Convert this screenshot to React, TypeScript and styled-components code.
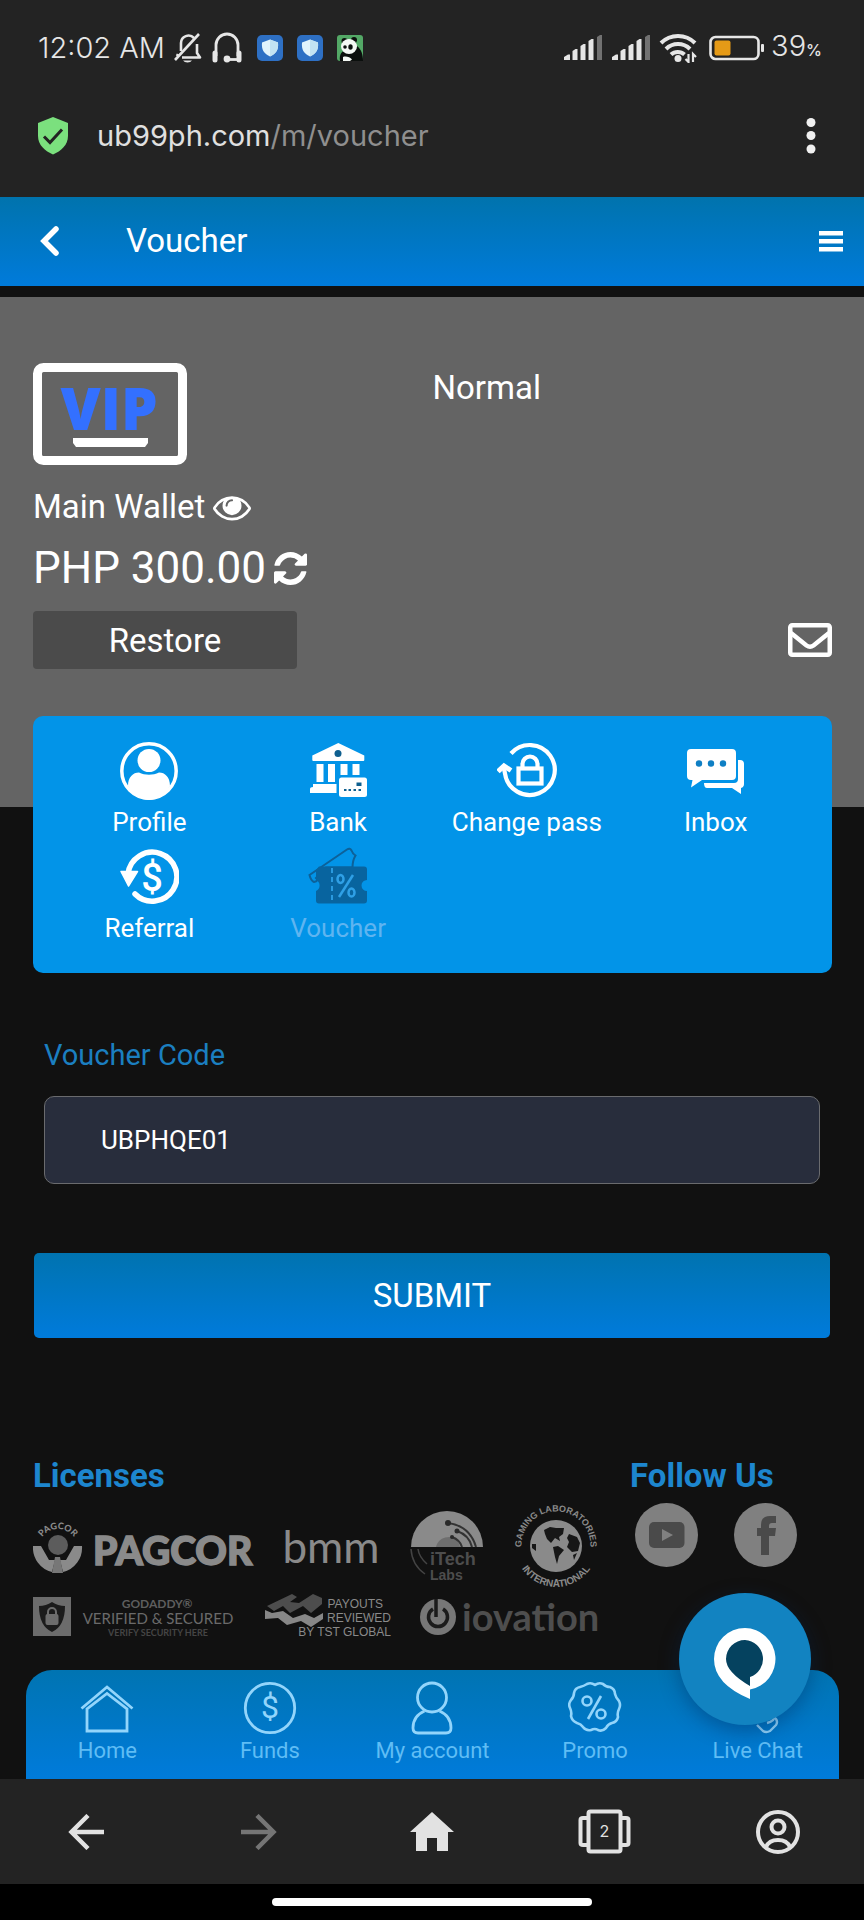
import React, {useState} from 'react'
import styled, {createGlobalStyle} from 'styled-components'

const GlobalStyle = createGlobalStyle`
    * {
        box-sizing: border-box;
    }
    body {
        margin: 0;
        background: #111;
        color: #fff;
        font-family: Roboto, "Liberation Sans", sans-serif;
    }
    svg {
        display: block;
        flex: none;
    }
    a {
        color: inherit;
        text-decoration: none;
    }
    button {
        padding: 0;
        border: 0;
        background: none;
        color: inherit;
        font: inherit;
        cursor: pointer;
    }
`

const Page = styled.div`
    display: flex;
    flex-direction: column;
    min-height: 100vh;
`
const StatusBar = styled.div`
    display: flex;
    align-items: center;
    justify-content: space-between;
    height: 76px;
    padding: 20px 42px 0 38px;
    background: #232323;
    color: #e6e6e6;
    font: 300 29px/36px Inter, sans-serif;
`
const StatusGroup = styled.div<{ $gap: number }>`
    display: flex;
    align-items: center;
    gap: ${p => p.$gap}px;
`
const Clock = styled.span`
    margin-right: -6px;
`
const Percent = styled.small`
    font-size: 16px;
    font-weight: 500;
`
const AddressBar = styled.div`
    display: flex;
    align-items: center;
    gap: 28px;
    height: 121px;
    padding: 0 28px 2px 37px;
    background: #232323;
`
const Address = styled.span`
    flex: 1;
    color: #e0e0e0;
    font: 400 29px/40px Inter, sans-serif;
`
const AddressPath = styled.span`
    color: #8f8f8f;
`
const Header = styled.header`
    display: flex;
    align-items: center;
    height: 89px;
    padding: 0 20px 2px 40px;
    background: linear-gradient(#0073ad, #007bdb);
`
const Title = styled.h1`
    flex: 1;
    margin: 0 0 0 66px;
    font-size: 33px;
    font-weight: 400;
    line-height: 40px;
`
const Main = styled.main`
    flex: 1;
    padding-top: 11px;
`
const Wallet = styled.section`
    padding: 66px 32px 138px 33px;
    background: #646464;
`
const Level = styled.div`
    display: grid;
    grid-template-columns: 1fr 1fr;
    font-size: 33px;
    line-height: 50px;
`
const WalletName = styled.div`
    display: flex;
    align-items: center;
    gap: 8px;
    margin-top: 22px;
    font-size: 33px;
    line-height: 40px;
`
const Balance = styled.div`
    display: flex;
    align-items: center;
    gap: 8px;
    margin-top: 11px;
    font-size: 44px;
    line-height: 60px;
`
const WalletActions = styled.div`
    display: flex;
    align-items: center;
    justify-content: space-between;
    margin-top: 13px;
`
const RestoreButton = styled.button`
    width: 264px;
    height: 58px;
    border-radius: 4px;
    background: #4b4b4b;
    font-size: 33px;
`
const Menu = styled.nav`
    display: grid;
    grid-template-columns: repeat(4, 1fr);
    margin: -91px 32px 0 33px;
    padding: 23px 22px 22px;
    border-radius: 10px;
    background: #0294e8;
`
const MenuItem = styled.a<{ $current?: boolean }>`
    display: flex;
    flex-direction: column;
    align-items: center;
    gap: 1px;
    height: 106px;
    color: ${p => p.$current ? '#5fb4f0' : '#fff'};
    font-size: 26px;
    line-height: 40px;
    white-space: nowrap;

    svg {
        margin: 1px 0;
    }
`
const Form = styled.form`
    padding: 62px 34px 0;
`
const Field = styled.div`
    display: flex;
    flex-direction: column;
    gap: 21px;
    padding: 0 10px;
`
const Label = styled.label`
    color: #1b7fc0;
    font-size: 29px;
    line-height: 40px;
`
const CodeInput = styled.input`
    width: 100%;
    height: 88px;
    padding: 0 56px;
    border: 1px solid #6a6b6e;
    border-radius: 10px;
    outline: 0;
    background: #282d3c;
    color: #fff;
    font: 26px Roboto, sans-serif;
`
const SubmitButton = styled.button`
    width: 100%;
    height: 85px;
    margin-top: 69px;
    border-radius: 5px;
    background: linear-gradient(#0073b0, #007bdb);
    font-size: 33px;
`
const Footer = styled.footer`
    display: flex;
    gap: 30px;
    padding: 118px 32px 27px 33px;
`
const Licenses = styled.section`
    flex: 0 1 567px;
`
const Follow = styled.section`
    flex: 1;
`
const FooterTitle = styled.h2`
    margin: 0 0 7px;
    color: #1d86ce;
    font-size: 33px;
    font-weight: 700;
    line-height: 40px;
`
const LogoRow = styled.div<{ $height: number }>`
    display: flex;
    align-items: center;
    justify-content: space-between;
    height: ${p => p.$height}px;
    margin-bottom: 2px;
`
const Socials = styled.div`
    display: flex;
    gap: 36px;
    padding: 0 5px;
`
const TabBar = styled.nav`
    position: relative;
    display: grid;
    grid-template-columns: repeat(5, 1fr);
    height: 109px;
    margin: 0 25px 0 26px;
    padding-top: 11px;
    border-radius: 26px 26px 0 0;
    background: linear-gradient(#0074b2, #007bdb);
`
const Tab = styled.a`
    display: flex;
    flex-direction: column;
    align-items: center;
    color: #5fbdf5;
    font-size: 22px;
    line-height: 32px;
    white-space: nowrap;

    svg {
        color: #93d5fb;
    }
`
const ChatBubble = styled.button`
    position: absolute;
    top: -77px;
    right: 28px;
    display: flex;
    align-items: flex-start;
    justify-content: center;
    width: 132px;
    height: 132px;
    padding-top: 35px;
    border-radius: 50%;
    background: #1283c1;
    box-shadow: 0 6px 20px rgba(0, 40, 90, .4);
`
const BrowserBar = styled.div`
    display: grid;
    grid-template-columns: repeat(5, 1fr);
    height: 105px;
    background: #232323;
    color: #e2e2e2;
`
const BrowserButton = styled.button`
    display: flex;
    align-items: center;
    justify-content: center;

    &:disabled {
        color: #757575;
    }
`
const GestureArea = styled.div`
    display: flex;
    align-items: center;
    justify-content: center;
    height: 36px;
    background: #000;
`
const GesturePill = styled.div`
    width: 37%;
    height: 8px;
    border-radius: 4px;
    background: #fff;
`

const BellOff = () => (
    <svg width="30" height="32" viewBox="0 0 30 32" fill="none" stroke="currentColor" strokeWidth="2.6">
        <path d="M8 19V11a7.5 7.5 0 0 1 13-5M24 12v9l3 4.5H9M5 22l-1 2" strokeLinejoin="round" />
        <path d="M26 2L2 28" />
        <path d="M10 28.5a5 3.5 0 0 0 9 0z" fill="currentColor" stroke="none" />
    </svg>
)

const Headset = () => (
    <svg width="32" height="32" viewBox="0 0 32 32" fill="none" stroke="currentColor" strokeWidth="2.8">
        <path d="M5 24V13a11 11 0 0 1 22 0v11" />
        <path d="M4 21v7M28 21v7" strokeWidth="5" strokeLinecap="round" />
        <path d="M27 27.5H16" />
        <circle cx="16" cy="27" r="3.4" fill="currentColor" stroke="none" />
    </svg>
)

const ShieldApp = () => (
    <svg width="26" height="26" viewBox="0 0 26 26">
        <rect width="26" height="26" rx="5" fill="#2e70c4" />
        <path d="M13 4.5l8 3c.6 7-1.5 11-8 14-6.5-3-8.6-7-8-14z" fill="#e2f4fc" />
        <path d="M13 4.5l8 3c.6 7-1.5 11-8 14z" fill="#c2e2f2" />
    </svg>
)

const PandaApp = () => (
    <svg width="26" height="26" viewBox="0 0 26 26">
        <rect width="26" height="26" rx="3" fill="#53a866" />
        <path d="M3 26c-1-7 2-10 6-11l11-4c4 3 6 8 6 15z" fill="#0b0f0d" />
        <circle cx="7.5" cy="6" r="3" fill="#0b0f0d" />
        <circle cx="17" cy="5" r="3" fill="#0b0f0d" />
        <ellipse cx="12" cy="11.5" rx="8" ry="7.5" fill="#f4f8f4" />
        <circle cx="8" cy="12" r="1.8" fill="#0b0f0d" />
        <ellipse cx="13.5" cy="12" rx="2.2" ry="2.8" fill="#0b0f0d" />
        <path d="M6 22c3-1 7 0 9 2.5l-2 1.5H6z" fill="#f4f8f4" />
    </svg>
)

const Signal = () => (
    <svg width="40" height="26" viewBox="0 0 40 26" fill="currentColor">
        <path d="M1 22l4-2.5h2V25H1zM9.5 16l3-2h2v11h-5zM17.5 11l3-2h2v16h-5zM25.5 6l3-2h2v21h-5z" />
        <path d="M34 2l3-2h2v25h-5z" opacity=".4" />
    </svg>
)

const Wifi = () => (
    <svg width="38" height="30" viewBox="0 0 38 30" fill="none" stroke="currentColor" strokeWidth="4">
        <path d="M2 10a24 24 0 0 1 34 0M7 16a17 17 0 0 1 24 0M12 21.5a10 10 0 0 1 13.5 0" />
        <circle cx="19" cy="25.5" r="3.5" fill="currentColor" stroke="none" />
        <path d="M29.5 21v8l-3-3M34 29v-8l3 3" strokeWidth="2.2" />
    </svg>
)

const Battery = () => (
    <svg width="56" height="26" viewBox="0 0 56 26" fill="none">
        <rect x="1.5" y="2" width="48" height="22" rx="5" stroke="currentColor" strokeWidth="2.6" />
        <rect x="5.5" y="5.5" width="16" height="15" rx="2" fill="#e59a17" />
        <rect x="52" y="9" width="3" height="8" rx="1" fill="currentColor" />
    </svg>
)

const SecureShield = () => (
    <svg width="32" height="38" viewBox="0 0 32 38">
        <path d="M16 0l15 6v13c0 9-7 15-15 18.5C8 34 1 28 1 19V6z" fill="#7be07e" />
        <path d="M7 19.5l6 6 12-13" fill="none" stroke="#232323" strokeWidth="3" />
    </svg>
)

const Dots = () => (
    <svg width="50" height="38" viewBox="0 0 50 38" fill="#f0f0f0">
        <circle cx="25" cy="5.5" r="4.5" />
        <circle cx="25" cy="18.5" r="4.5" />
        <circle cx="25" cy="32" r="4.5" />
    </svg>
)

const VipBadge = () => (
    <svg width="154" height="102" viewBox="0 0 154 102">
        <rect x="4.5" y="4.5" width="145" height="93" rx="6" fill="none" stroke="#fff" strokeWidth="9" />
        <text x="76" y="67" textAnchor="middle" fontFamily="Open Sans, sans-serif" fontWeight="800" fontSize="58" fill="#3370ff">VIP</text>
        <path d="M40 75h75v5l-3 4H43l-3-4z" fill="#fff" />
    </svg>
)

const Eye = () => (
    <svg width="38" height="38" viewBox="0 0 1792 1792" fill="currentColor">
        <path d="M1664 960q-152-236-381-353 61 104 61 225 0 185-131.5 316.5t-316.5 131.5-316.5-131.5-131.5-316.5q0-121 61-225-229 117-381 353 133 205 333.5 326.5t434.5 121.5 434.5-121.5 333.5-326.5zm-720-384q0-20-14-34t-34-14q-125 0-214.5 89.5t-89.5 214.5q0 20 14 34t34 14 34-14 14-34q0-86 61-147t147-61q20 0 34-14t14-34zm848 384q0 34-20 69-140 230-376.5 368.5t-499.5 138.5-499.5-139-376.5-368q-20-35-20-69t20-69q140-229 376.5-368t499.5-139 499.5 139 376.5 368q20 35 20 69z" />
    </svg>
)

const Refresh = () => (
    <svg width="33" height="33" viewBox="0 0 1536 1536" fill="currentColor">
        <path d="M1511 928q0 5-1 7-64 268-268 434.5t-478 166.5q-146 0-282.5-55t-243.5-157l-129 129q-19 19-45 19t-45-19-19-45v-448q0-26 19-45t45-19h448q26 0 45 19t19 45-19 45l-137 137q71 66 161 102t187 36q134 0 250-65t186-179q11-17 53-117 8-23 30-23h192q13 0 22.5 9.5t9.5 22.5zm25-800v448q0 26-19 45t-45 19h-448q-26 0-45-19t-19-45 19-45l138-138q-148-137-349-137-134 0-250 65t-186 179q-11 17-53 117-8 23-30 23h-199q-13 0-22.5-9.5t-9.5-22.5v-7q65-268 270-434.5t480-166.5q146 0 284 55.5t245 156.5l130-129q19-19 45-19t45 19 19 45z" />
    </svg>
)

const Envelope = () => (
    <svg width="44" height="34" viewBox="0 0 44 34" fill="none" stroke="currentColor" strokeWidth="4.5">
        <rect x="2.25" y="2.25" width="39.5" height="29.5" rx="2" />
        <path d="M3 10l15.5 12.5q3.5 2.5 7 0L41 10" />
    </svg>
)

const ProfileIcon = () => (
    <svg width="60" height="60" viewBox="0 0 60 60" fill="currentColor">
        <circle cx="30" cy="31" r="27.2" fill="none" stroke="currentColor" strokeWidth="3.5" />
        <circle cx="30" cy="20.5" r="11.5" />
        <path d="M9 46c0-9 5-13.5 11-13.5 6 3 14 3 20 0 6 0 11 4.5 11 13.5-5 8-13 14-21 14s-16-6-21-14z" />
    </svg>
)

const BankIcon = () => (
    <svg width="60" height="60" viewBox="0 0 60 60" fill="currentColor">
        <path d="M30.3 3l26 12.5V20q0 1-1 1h-50q-1 0-1-1v-4.5zM8.5 24h7v18h-7zM20 24h7v18h-7zM32.5 24h7v11h-7zM44.5 24h7v11h-7z" />
        <path d="M5 44h23.5v9H2v-4q0-2 3-2z" />
        <rect x="31" y="37.5" width="28" height="19.5" rx="2.5" />
        <g fill="#0e5f8f">
            <circle cx="30" cy="13.5" r="3.5" />
            <rect x="48.5" y="42.5" width="5" height="3.5" />
            <path d="M36 49h2.5v2H36zM40.5 49H43v2h-2.5zM45.5 49H48v2h-2.5zM50.5 49H53v2h-2.5z" />
        </g>
    </svg>
)

const PasswordIcon = () => (
    <svg width="60" height="60" viewBox="0 0 60 60" fill="none" stroke="currentColor" strokeWidth="4.2">
        <path d="M14 13.5a25 25 0 1 1-6 20l-1-5" />
        <path d="M1 31.5l6-5.5 7 4.5" strokeWidth="5" />
        <rect x="21.5" y="28.5" width="23" height="15" />
        <path d="M25.5 28v-4a7.5 7.5 0 0 1 15 0v4" />
    </svg>
)

const InboxIcon = () => (
    <svg width="60" height="60" viewBox="0 0 60 60" fill="currentColor">
        <path d="M5 9h41q4 0 4 4v23q0 4-4 4H16L5 47.5 6.5 40H5q-4 0-4-4V13q0-4 4-4z" />
        <path d="M52 20h2q4 0 4 4v20q0 3-3 4v6l-9-6H21q-3 0-3-5h30q4 0 4-4z" />
        <g fill="#0f7fc4">
            <circle cx="13" cy="23.5" r="3.2" />
            <circle cx="25" cy="23.5" r="3.2" />
            <circle cx="37" cy="23.5" r="3.2" />
        </g>
    </svg>
)

const ReferralIcon = () => (
    <svg width="60" height="60" viewBox="0 0 60 60" fill="currentColor">
        <path d="M9 28a24.5 24.5 0 1 1 7 20" fill="none" stroke="currentColor" strokeWidth="5.5" strokeLinecap="round" />
        <path d="M2 25.5h16.5L9.5 40z" stroke="currentColor" strokeWidth="1.5" strokeLinejoin="round" />
        <text x="33" y="45" textAnchor="middle" fontSize="38" fontWeight="500">$</text>
    </svg>
)

const VoucherIcon = () => (
    <svg width="60" height="60" viewBox="0 0 60 60">
        <path d="M1.5 29L39 3.5q3-2 4.5 1 1 3 4 5-3 5-3 12H18L8 32q3 3-2 4-3-1-4.5-7z" fill="none" stroke="#0d6199" strokeWidth="2" />
        <path d="M11 20.5h45q3 0 3 3V34a5.5 5.5 0 0 0 0 11v9.5q0 3-3 3H11q-3 0-3-3V45a6 6 0 0 0 0-11V24z" fill="#08649f" />
        <path d="M24 22v36" stroke="#2fa0e6" strokeWidth="1.8" strokeDasharray="5 4" />
        <g fill="none" stroke="#2fa0e6" strokeWidth="2.5">
            <ellipse cx="32.5" cy="33" rx="3" ry="4" />
            <ellipse cx="43.5" cy="46.5" rx="3" ry="4" />
            <path d="M45 29L31 51" />
        </g>
    </svg>
)

const PagcorLogo = () => (
    <svg width="222" height="52" viewBox="0 0 222 52" fill="#8a8a8a">
        <defs>
            <path id="pagcor-arc" d="M7 20a19.5 19.5 0 0 1 36 0" />
        </defs>
        <text fontFamily="Lato, sans-serif" fontWeight="900" fontSize="9">
            <textPath href="#pagcor-arc" startOffset="50%" textAnchor="middle">PAGCOR</textPath>
        </text>
        <path d="M0 25h8l8 14h6l-3 12A25 25 0 0 1 0 25zM49 25h-8l-8 14h-6l3 12A25 25 0 0 0 49 25z" />
        <circle cx="25" cy="24" r="10" fill="#5c5c5c" />
        <path d="M22 36h5l3 16h-11z" fill="#777" />
        <text x="60" y="44" fontFamily="Lato, sans-serif" fontWeight="900" fontSize="39" stroke="#8a8a8a" strokeWidth="1.5">PAGCOR</text>
    </svg>
)

const BmmLogo = () => (
    <svg width="98" height="60" viewBox="0 0 98 60">
        <text x="48" y="46" textAnchor="middle" fontFamily="Lato, sans-serif" fontSize="44" fill="#8a8a8a">bmm</text>
    </svg>
)

const ItechLogo = () => (
    <svg width="74" height="73" viewBox="0 0 74 73">
        <path d="M1 36a36 36 0 0 1 72 0z" fill="#8a8a8a" />
        <path d="M26 36a13 13 0 0 1 22-6l2 6z" fill="#6e6e6e" />
        <path d="M38 12q22 3 28 24M47 20q12 4 15 16M42 26q8 3 10 10" fill="none" stroke="#333" strokeWidth="2" />
        <g fill="#2a2a2a">
            <circle cx="38" cy="12" r="3" />
            <circle cx="47" cy="20" r="2.5" />
            <circle cx="42" cy="26" r="2" />
        </g>
        <path d="M1 38q1 16 14 25M8 38q1 8 9 15" fill="none" stroke="#444" strokeWidth="1.5" />
        <g fill="#4d4d4d" fontFamily="Liberation Sans, sans-serif" fontWeight="700">
            <text x="20" y="54" fontSize="18">iTech</text>
            <text x="20" y="69" fontSize="14">Labs</text>
        </g>
    </svg>
)

const GamingLabsLogo = () => (
    <svg width="88" height="88" viewBox="0 0 88 88" fill="#8a8a8a">
        <defs>
            <path id="labs-top" d="M13 58a34.5 34.5 0 1 1 62 0" />
            <path id="labs-bottom" d="M3 43a41 41 0 0 0 82 0" />
        </defs>
        <g fontFamily="Liberation Sans, sans-serif" fontWeight="700">
            <text fontSize="9">
                <textPath href="#labs-top" startOffset="50%" textAnchor="middle">GAMING LABORATORIES</textPath>
            </text>
            <text fontSize="10">
                <textPath href="#labs-bottom" startOffset="50%" textAnchor="middle">INTERNATIONAL</textPath>
            </text>
        </g>
        <circle cx="44" cy="43" r="26" />
        <path d="M32 27l6-3 6 1 8 0-1 6-4 3 1 4-5-3-4 5-4-4-2-5zM41 44l5-1 6 4-5 6-2 8-2-7zM57 31l8 3 3 6-2 8-6 1-5-5 2-5-2-4zM20 41h4v7l-4-3zM61 52l4-2-3 7z" fill="#171717" />
    </svg>
)

const GodaddyLogo = () => (
    <svg width="204" height="44" viewBox="0 0 204 44">
        <rect width="38" height="39" y="2" fill="#6c6c6c" />
        <path d="M19 7q6 4 13 4 0 20-13 26Q6 31 6 11q7 0 13-4z" fill="#1b1b1b" />
        <rect x="12.5" y="19" width="13" height="11" rx="2" fill="#6c6c6c" />
        <path d="M15 20v-3a4 4 0 0 1 8 0v3" fill="none" stroke="#6c6c6c" strokeWidth="2" />
        <g textAnchor="middle" fontFamily="Lato, sans-serif">
            <text x="124" y="13" fontSize="12" fill="#5e5e5e" fontWeight="700">GODADDY®</text>
            <text x="125" y="29" fontSize="15" fill="#6a6a6a">VERIFIED &amp; SECURED</text>
            <text x="125" y="41" fontSize="9" fill="#454545" fontWeight="700">VERIFY SECURITY HERE</text>
        </g>
    </svg>
)

const TstLogo = () => (
    <svg width="127" height="48" viewBox="0 0 127 48">
        <path d="M2 13L27 1l5 3-7 5 9 1L48 1l9 4v6l-11 9-8-7-13 7-7-7-9 5z" fill="#4d4d4d" />
        <path d="M0 17l7 3 11-2 10 7 12-4 9 4 9-5v6l-12 8-10-6-14 4-9-7-13 1z" fill="#878787" />
        <g fontFamily="Liberation Sans, sans-serif" fontSize="12" fill="#8a8a8a" textAnchor="end">
            <text x="118" y="15">PAYOUTS</text>
            <text x="126" y="29">REVIEWED</text>
            <text x="126" y="43">BY TST GLOBAL</text>
        </g>
    </svg>
)

const IovationLogo = () => (
    <svg width="181" height="48" viewBox="0 0 181 48">
        <circle cx="19" cy="24" r="18" fill="#777" />
        <path d="M24 16a9.5 9.5 0 1 1-10 0M17 6v18" fill="none" stroke="#1b1b1b" strokeWidth="3.5" />
        <text x="43" y="38" fontFamily="Lato, sans-serif" fontWeight="700" fontSize="38" fill="#4e4e4e">iovation</text>
    </svg>
)

const Youtube = () => (
    <svg width="63" height="64" viewBox="0 0 63 64">
        <ellipse cx="31.5" cy="32" rx="31.5" ry="32" fill="#808080" />
        <rect x="14" y="19" width="35.5" height="26" rx="5" fill="#4a4a4a" />
        <path d="M27 26l11 6-11 6z" fill="#808080" />
    </svg>
)

const Facebook = () => (
    <svg width="63" height="64" viewBox="0 0 63 64">
        <ellipse cx="31.5" cy="32" rx="31.5" ry="32" fill="#808080" />
        <path d="M27 52V33h-4v-8h4v-3q0-9 9-9h6v7h-4q-3 0-3 3v2h7l-1 8h-6v19z" fill="#4a4a4a" />
    </svg>
)

const HomeTabIcon = () => (
    <svg width="54" height="54" viewBox="0 0 54 54" fill="none" stroke="currentColor" strokeWidth="2.8">
        <path d="M1.5 27.5L27 6l25.5 21.5" />
        <path d="M7 50V28L27 12.5 47 28v22z" />
    </svg>
)

const FundsIcon = () => (
    <svg width="54" height="54" viewBox="0 0 54 54">
        <circle cx="27" cy="27" r="24.7" fill="none" stroke="currentColor" strokeWidth="2.8" />
        <text x="27" y="37" textAnchor="middle" fontSize="32" fill="currentColor">$</text>
    </svg>
)

const AccountIcon = () => (
    <svg width="54" height="54" viewBox="0 0 54 54" fill="none" stroke="currentColor" strokeWidth="2.8">
        <circle cx="27" cy="16.5" r="14.5" />
        <path d="M19.5 30Q8 35 8 47q0 5 5 5h28q5 0 5-5 0-12-11.5-17" />
    </svg>
)

const PromoIcon = () => (
    <svg width="54" height="54" viewBox="0 0 54 54" fill="none" stroke="currentColor" strokeWidth="2.6">
        <path d="M27 4q4-3 8-1 3 3 7 3 5 2 5 7 1 4 4 7 2 4 0 8-2 4-1 8-1 5-6 6-4 1-6 5-4 4-8 2-3-2-7 0-5 1-8-3-2-3-6-4-5-2-6-7 1-4-1-8-2-4 1-8 3-3 3-7 1-5 6-6 4-1 7-3 4-2 8 1z" strokeLinejoin="round" />
        <circle cx="19" cy="20" r="4.5" />
        <circle cx="33" cy="33" r="4.5" />
        <path d="M33 15L20 38" />
    </svg>
)

const LiveChatIcon = () => (
    <svg width="54" height="54" viewBox="0 0 54 54" fill="none" stroke="currentColor" strokeWidth="2.4">
        <path d="M10 24a17 17 0 0 1 34 0v10q0 6-8 8" />
        <path d="M26 44l6 6q3 2 7 0l6-6q2-3 0-6l-5-5" strokeLinejoin="round" />
    </svg>
)

const ChatLogo = () => (
    <svg width="62" height="72" viewBox="0 0 62 72">
        <path d="M31 0a31 31 0 0 1 5 61.5V71Q0 56 0 31A31 31 0 0 1 31 0z" fill="#fff" />
        <path d="M31 12a19 19 0 0 1 5 37v9Q12 44 12 31a19 19 0 0 1 19-19z" fill="#05425f" />
    </svg>
)

const ArrowLeft = () => (
    <svg width="36" height="36" viewBox="0 0 36 36" fill="none" stroke="currentColor" strokeWidth="4.5">
        <path d="M36 18H3M20 1.5L3.5 18 20 34.5" />
    </svg>
)

const ArrowRight = () => (
    <svg width="36" height="36" viewBox="0 0 36 36" fill="none" stroke="currentColor" strokeWidth="4.5">
        <path d="M0 18h33M16 1.5L32.5 18 16 34.5" />
    </svg>
)

const HomeSolid = () => (
    <svg width="44" height="40" viewBox="0 0 44 40" fill="currentColor">
        <path d="M22 0l22 20h-6v19H27V26H17v13H6V20H0z" />
    </svg>
)

const TabsIcon = () => (
    <svg width="54" height="46" viewBox="0 0 54 46" fill="none" stroke="currentColor" strokeWidth="4">
        <rect x="10.5" y="2.5" width="32" height="40" rx="2" />
        <path d="M10 9H5Q2.5 9 2.5 11v23q0 2 2.5 2h5M43 9h5q2.5 0 2.5 2v23q0 2-2.5 2h-5" />
        <text x="26.5" y="28" textAnchor="middle" fontFamily="Inter, sans-serif" fontSize="16" fill="currentColor" stroke="none">2</text>
    </svg>
)

const UserCircle = () => (
    <svg width="46" height="46" viewBox="0 0 46 46" fill="none" stroke="currentColor" strokeWidth="4">
        <circle cx="23" cy="23" r="20" />
        <circle cx="23" cy="18" r="6.5" />
        <path d="M11 38q3-7 12-7t12 7" />
    </svg>
)

const BackIcon = () => (
    <svg width="20" height="30" viewBox="0 0 20 30" fill="none" stroke="currentColor" strokeWidth="5.5">
        <path d="M16 3L4 15l12 12" strokeLinecap="round" />
    </svg>
)

const Burger = () => (
    <svg width="26" height="24" viewBox="0 0 26 24" fill="currentColor">
        <path d="M1 2h24v4.5H1zM1 10h24v4.5H1zM1 18h24v4.5H1z" />
    </svg>
)

const menuItems = [
    {name: 'Profile', icon: <ProfileIcon />},
    {name: 'Bank', icon: <BankIcon />},
    {name: 'Change pass', icon: <PasswordIcon />},
    {name: 'Inbox', icon: <InboxIcon />},
    {name: 'Referral', icon: <ReferralIcon />},
    {name: 'Voucher', icon: <VoucherIcon />, current: true}
]

const tabs = [
    {name: 'Home', icon: <HomeTabIcon />},
    {name: 'Funds', icon: <FundsIcon />},
    {name: 'My account', icon: <AccountIcon />},
    {name: 'Promo', icon: <PromoIcon />},
    {name: 'Live Chat', icon: <LiveChatIcon />}
]

export default function App() {
    const [code, setCode] = useState('UBPHQE01')

    const onSubmit = (e: React.FormEvent) => {
        e.preventDefault()
    }

    return (
        <Page>
            <GlobalStyle />
            <StatusBar>
                <StatusGroup $gap={14}>
                    <Clock>12:02 AM</Clock>
                    <StatusGroup $gap={8}>
                        <BellOff />
                        <Headset />
                    </StatusGroup>
                    <ShieldApp />
                    <ShieldApp />
                    <PandaApp />
                </StatusGroup>
                <StatusGroup $gap={12}>
                    <StatusGroup $gap={8}>
                        <Signal />
                        <Signal />
                        <Wifi />
                    </StatusGroup>
                    <StatusGroup $gap={6}>
                        <Battery />
                        <span>39<Percent>%</Percent></span>
                    </StatusGroup>
                </StatusGroup>
            </StatusBar>
            <AddressBar>
                <SecureShield />
                <Address>ub99ph.com<AddressPath>/m/voucher</AddressPath></Address>
                <button aria-label="More"><Dots /></button>
            </AddressBar>

            <Header>
                <button aria-label="Back"><BackIcon /></button>
                <Title>Voucher</Title>
                <button aria-label="Menu"><Burger /></button>
            </Header>

            <Main>
                <Wallet>
                    <Level>
                        <VipBadge />
                        <span>Normal</span>
                    </Level>
                    <WalletName>
                        Main Wallet
                        <button aria-label="Hide balance"><Eye /></button>
                    </WalletName>
                    <Balance>
                        PHP 300.00
                        <button aria-label="Refresh balance"><Refresh /></button>
                    </Balance>
                    <WalletActions>
                        <RestoreButton>Restore</RestoreButton>
                        <a href="#messages" aria-label="Messages"><Envelope /></a>
                    </WalletActions>
                </Wallet>

                <Menu>
                    {menuItems.map(item => (
                        <MenuItem key={item.name} href="#menu" $current={item.current}>
                            {item.icon}
                            {item.name}
                        </MenuItem>
                    ))}
                </Menu>

                <Form onSubmit={onSubmit}>
                    <Field>
                        <Label htmlFor="code">Voucher Code</Label>
                        <CodeInput id="code" type="text" value={code} onChange={e => setCode(e.target.value)} />
                    </Field>
                    <SubmitButton type="submit">SUBMIT</SubmitButton>
                </Form>

                <Footer>
                    <Licenses>
                        <FooterTitle>Licenses</FooterTitle>
                        <LogoRow $height={88}>
                            <PagcorLogo />
                            <BmmLogo />
                            <ItechLogo />
                            <GamingLabsLogo />
                        </LogoRow>
                        <LogoRow $height={48}>
                            <GodaddyLogo />
                            <TstLogo />
                            <IovationLogo />
                        </LogoRow>
                    </Licenses>
                    <Follow>
                        <FooterTitle>Follow Us</FooterTitle>
                        <Socials>
                            <a href="#youtube" aria-label="YouTube"><Youtube /></a>
                            <a href="#facebook" aria-label="Facebook"><Facebook /></a>
                        </Socials>
                    </Follow>
                </Footer>
            </Main>

            <TabBar>
                {tabs.map(tab => (
                    <Tab key={tab.name} href="#tab">
                        {tab.icon}
                        {tab.name}
                    </Tab>
                ))}
                <ChatBubble aria-label="Open chat"><ChatLogo /></ChatBubble>
            </TabBar>

            <BrowserBar>
                <BrowserButton aria-label="Go back"><ArrowLeft /></BrowserButton>
                <BrowserButton aria-label="Go forward" disabled><ArrowRight /></BrowserButton>
                <BrowserButton aria-label="Browser home"><HomeSolid /></BrowserButton>
                <BrowserButton aria-label="Open tabs"><TabsIcon /></BrowserButton>
                <BrowserButton aria-label="Account"><UserCircle /></BrowserButton>
            </BrowserBar>
            <GestureArea>
                <GesturePill />
            </GestureArea>
        </Page>
    )
}
